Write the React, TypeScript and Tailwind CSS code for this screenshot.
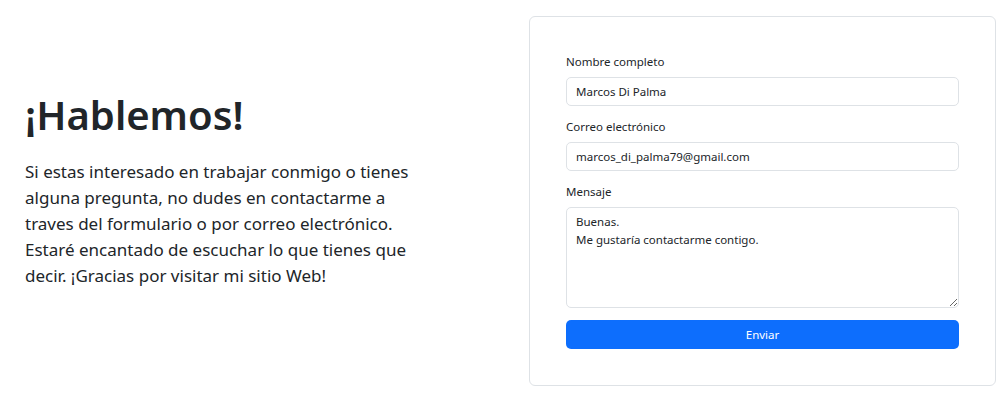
import { useState } from 'react'

export default function App() {
  const [name, setName] = useState('Marcos Di Palma')
  const [email, setEmail] = useState('marcos_di_palma79@gmail.com')
  const [msg, setMsg] = useState('Buenas.\nMe gustaría contactarme contigo.')

  return (
    <div className="flex items-center w-[1007px] h-[402px] bg-white text-[#212529] font-['Noto_Sans',sans-serif]">
      <div className="w-[529px] shrink-0 pl-[25px] pr-[109px] pb-[22px]">
        <h1 className="text-[40px] leading-[48px] font-semibold mb-[20px]">¡Hablemos!</h1>
        <p className="text-[17px] leading-[26px]">
          Si estas interesado en trabajar conmigo o tienes alguna pregunta, no dudes en contactarme a traves del formulario o por correo electrónico. Estaré encantado de escuchar lo que tienes que decir. ¡Gracias por visitar mi sitio Web!
        </p>
      </div>

      <div className="flex-1 mr-[11px] h-[370px] border border-[#dee2e6] rounded-[6px] px-[36px] pt-[36px]">
        <form className="flex flex-col" onSubmit={e => e.preventDefault()}>
          <label className="text-[11.5px] leading-[18px] mb-[6px]">Nombre completo</label>
          <input
            value={name}
            onChange={e => setName(e.target.value)}
            className="h-[29px] border border-[#dee2e6] rounded-[5px] px-[9px] text-[11.5px] outline-none mb-[12px]"
          />
          <label className="text-[11.5px] leading-[18px] mb-[6px]">Correo electrónico</label>
          <input
            value={email}
            onChange={e => setEmail(e.target.value)}
            className="h-[29px] border border-[#dee2e6] rounded-[5px] px-[9px] text-[11.5px] outline-none mb-[12px]"
          />
          <label className="text-[11.5px] leading-[18px] mb-[6px]">Mensaje</label>
          <textarea
            value={msg}
            onChange={e => setMsg(e.target.value)}
            className="h-[101px] border border-[#dee2e6] rounded-[5px] px-[9px] py-[5px] text-[11.5px] leading-[18px] outline-none mb-[12px]"
          />
          <button className="h-[29px] bg-[#0d6efd] text-white rounded-[5px] text-[11.5px]">Enviar</button>
        </form>
      </div>
    </div>
  )
}
